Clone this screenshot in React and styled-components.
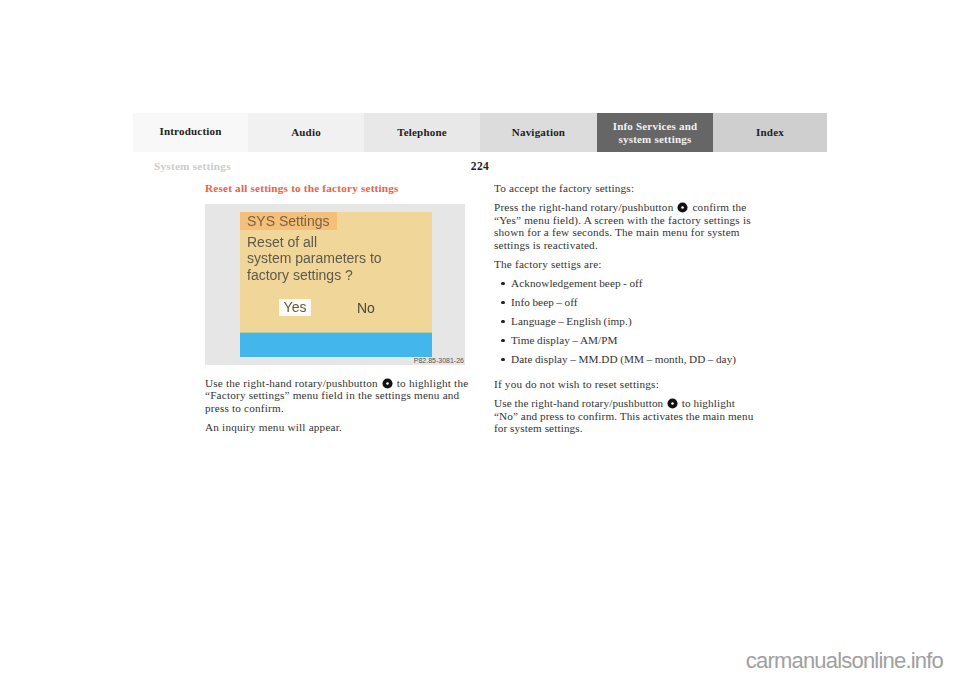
import React from 'react';
import styled, { createGlobalStyle } from 'styled-components';

const tabs = [
  { label: 'Introduction', bg: '#f8f8f8', raised: true },
  { label: 'Audio', bg: '#f1f1f1' },
  { label: 'Telephone', bg: '#e8e8e8' },
  { label: 'Navigation', bg: '#dcdcdc' },
  { label: 'Info Services and\nsystem settings', bg: '#666666', active: true },
  { label: 'Index', bg: '#cfcfcf' },
];

const factoryList = [
  'Acknowledgement beep - off',
  'Info beep – off',
  'Language – English (imp.)',
  'Time display – AM/PM',
  'Date display – MM.DD (MM – month, DD – day)',
];

const Knob = () => (
  <StKnob viewBox="0 0 12 12" aria-hidden="true">
    <circle cx="6" cy="6" r="5.5" fill="#111" />
    <circle cx="6" cy="6" r="1.4" fill="#fff" />
  </StKnob>
);

export default function App() {
  return (
    <StPage>
      <GlobalStyle />
      <StTabs>
        {tabs.map(tab => (
          <StTab key={tab.label} $bg={tab.bg} $active={tab.active} $raised={tab.raised}>
            {tab.label}
          </StTab>
        ))}
      </StTabs>

      <StPageHead>
        <StSection>System settings</StSection>
        <StPageNo>224</StPageNo>
      </StPageHead>

      <StColumns>
        <StColumn>
          <StHeading>Reset all settings to the factory settings</StHeading>
          <StFigure>
            <StScreen>
              <StScreenTab>SYS Settings</StScreenTab>
              <StQuestion>
                Reset of all
                <br />
                system parameters to
                <br />
                factory settings ?
              </StQuestion>
              <StChoices>
                <StYes>Yes</StYes>
                <StNo>No</StNo>
              </StChoices>
              <StBlueBar />
            </StScreen>
            <StFigureNo>P82.85-3081-26</StFigureNo>
          </StFigure>
          <StText>
            Use the right-hand rotary/pushbutton <Knob /> to highlight the
            <br />
            “Factory settings” menu field in the settings menu and
            <br />
            press to confirm.
          </StText>
          <StText>An inquiry menu will appear.</StText>
        </StColumn>

        <StColumn>
          <StText>To accept the factory settings:</StText>
          <StText>
            Press the right-hand rotary/pushbutton <Knob /> confirm the
            <br />
            “Yes” menu field). A screen with the factory settings is
            <br />
            shown for a few seconds. The main menu for system
            <br />
            settings is reactivated.
          </StText>
          <StText>The factory settigs are:</StText>
          <StList>
            {factoryList.map(item => (
              <StListItem key={item}>{item}</StListItem>
            ))}
          </StList>
          <StText>If you do not wish to reset settings:</StText>
          <StText $tight>
            Use the right-hand rotary/pushbutton <Knob /> to highlight
            <br />
            “No” and press to confirm. This activates the main menu
            <br />
            for system settings.
          </StText>
        </StColumn>
      </StColumns>

      <StFooter>carmanualsonline.info</StFooter>
    </StPage>
  );
}

const GlobalStyle = createGlobalStyle`
  body {
    margin: 0;
    background: #fff;
    font-family: "Liberation Serif", serif;
  }
`;

const StPage = styled.div`
  width: 960px;
  height: 678px;
  padding-top: 113px;
  box-sizing: border-box;
  display: flex;
  flex-direction: column;
  overflow: hidden;
`;

// tabs
const StTabs = styled.nav`
  width: 694px;
  margin-left: 133px;
  height: 39px;
  display: grid;
  grid-template-columns: 115px 116px 116px 117px 116px 114px;
`;
const StTab = styled.div`
  background: ${p => p.$bg};
  color: ${p => (p.$active ? '#f2f2f2' : '#222')};
  display: flex;
  align-items: center;
  justify-content: center;
  text-align: center;
  white-space: pre-line;
  font-size: 11px;
  font-weight: 700;
  line-height: 12.5px;
  letter-spacing: 0.2px;
  padding-bottom: ${p => (p.$raised ? '2px' : '0')};
  box-sizing: border-box;
`;

// page head
const StPageHead = styled.div`
  width: 694px;
  margin-left: 133px;
  padding-top: 4px;
  display: grid;
  grid-template-columns: 1fr auto 1fr;
  height: 20px;
  align-items: center;
  font-weight: 700;
`;
const StSection = styled.div`
  padding-left: 21px;
  padding-bottom: 1px;
  color: #cccccc;
  font-size: 11.2px;
  letter-spacing: 0.25px;
`;
const StPageNo = styled.div`
  color: #222;
  font-size: 11.5px;
  letter-spacing: 0.4px;
`;

// columns
const StColumns = styled.main`
  display: grid;
  grid-template-columns: 260px 260px;
  column-gap: 29px;
  margin-left: 205px;
  margin-top: 6px;
`;
const StColumn = styled.section`
  display: flex;
  flex-direction: column;
  gap: 6.5px;
`;
const StHeading = styled.h2`
  margin: 0 0 2.5px;
  color: #f0613f;
  font-size: 11.2px;
  font-weight: 700;
  line-height: 12.5px;
  letter-spacing: 0.2px;
`;
const StText = styled.p`
  margin: 0;
  color: #333;
  font-size: 11.2px;
  line-height: 12.5px;
  letter-spacing: ${p => (p.$tight ? '0.12px' : '0.2px')};
  word-spacing: ${p => (p.$tight ? '-0.2px' : '0')};
  white-space: nowrap;
`;
const StKnob = styled.svg`
  width: 11px;
  height: 11px;
  margin: 0 1px;
  vertical-align: -2px;
`;

// figure
const StFigure = styled.figure`
  margin: 0 0 5.5px;
  width: 260px;
  height: 161px;
  background: #e6e6e6;
  padding: 8px 0 0 35px;
  box-sizing: border-box;
  position: relative;
`;
const StScreen = styled.div`
  width: 192px;
  height: 145px;
  background: #f0d699;
  color: #5d5a4c;
  font-family: "Liberation Sans", sans-serif;
  display: flex;
  flex-direction: column;
  filter: blur(0.4px);
`;
const StScreenTab = styled.div`
  width: 97px;
  height: 18px;
  background: #f4bf78;
  color: #7d6143;
  font-size: 14px;
  line-height: 18px;
  padding-left: 7px;
  box-sizing: border-box;
`;
const StQuestion = styled.div`
  font-size: 14px;
  line-height: 16.5px;
  padding: 4px 0 0 7px;
`;
const StChoices = styled.div`
  display: flex;
  align-items: center;
  padding: 16px 0 0 39px;
  font-size: 14px;
  height: 17px;
`;
const StYes = styled.span`
  width: 32px;
  height: 17px;
  line-height: 17px;
  background: #fdfbf3;
  text-align: center;
`;
const StNo = styled.span`
  margin-left: 46px;
  color: #4a483c;
`;
const StBlueBar = styled.div`
  margin-top: auto;
  height: 25px;
  background: #43b7eb;
  border-top: 1px solid #a9cfb8;
  box-sizing: border-box;
`;
const StFigureNo = styled.figcaption`
  position: absolute;
  right: 1px;
  bottom: 0;
  font-family: "Liberation Sans", sans-serif;
  font-size: 7px;
  line-height: 8px;
  color: #555;
`;

// list
const StList = styled.ul`
  list-style: none;
  margin: 0 0 6.5px;
  padding: 0;
  display: flex;
  flex-direction: column;
  gap: 6.5px;
`;
const StListItem = styled.li`
  color: #333;
  font-size: 11.2px;
  line-height: 12.5px;
  letter-spacing: 0.08px;
  word-spacing: -0.4px;
  padding-left: 17px;
  position: relative;
  &::before {
    content: '';
    position: absolute;
    left: 7px;
    top: 5px;
    width: 3.5px;
    height: 3.5px;
    border-radius: 50%;
    background: #222;
  }
`;

const StFooter = styled.footer`
  margin-top: auto;
  padding: 0 17px 5px 0;
  text-align: right;
  color: #a0a0a0;
  font-family: "Liberation Sans", sans-serif;
  font-size: 22px;
  line-height: 25px;
  letter-spacing: -0.8px;
`;
